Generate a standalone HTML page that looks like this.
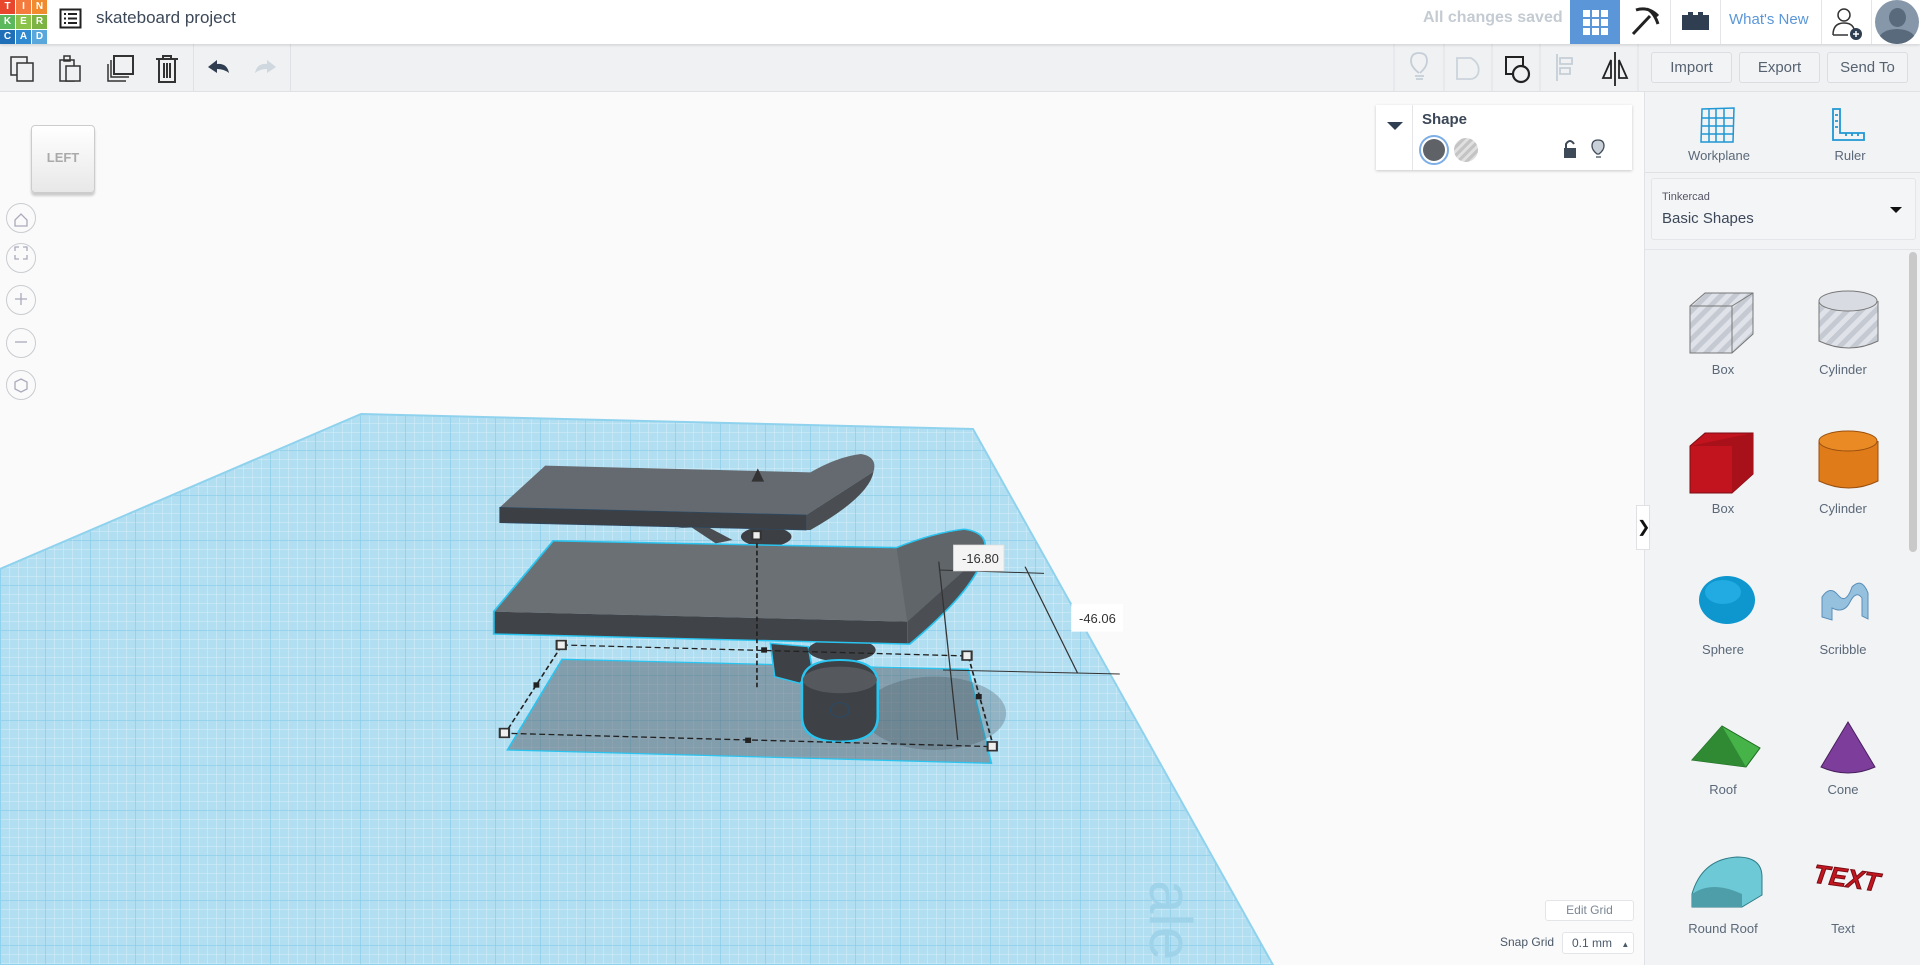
<!DOCTYPE html>
<html><head><meta charset="utf-8"><style>
*{margin:0;padding:0;box-sizing:border-box}
html,body{overflow:hidden}
body{width:1920px;height:965px;overflow:hidden;background:#fafafa;font-family:"Liberation Sans",sans-serif;position:relative;color:#3c4a5a}
.a{position:absolute}
.top{left:0;top:0;width:1920px;height:44px;background:#fff;box-shadow:0 1px 3px rgba(0,0,0,.15);z-index:3}
.tb{left:0;top:44px;width:1644px;height:48px;background:#f0f1f3;border-bottom:1px solid #dfe1e4}
.btn{top:52px;height:31px;border:1px solid #dadde1;border-radius:3px;font-size:15px;color:#566270;text-align:center;line-height:29px;background:#f2f3f5;z-index:2}
.rp{left:1644px;top:92px;width:276px;height:873px;background:#f2f3f5;border-left:1px solid #e0e2e5;overflow:hidden}
.tbr{left:1644px;top:44px;width:276px;height:48px;background:#f0f1f3;border-bottom:1px solid #dfe1e4}
.lbl{font-size:13px;color:#5a6878;text-align:center;width:120px}
.nav{width:30px;height:30px;border:1px solid #c9ccd0;border-radius:50%;left:6px;background:#fafafa}
</style></head><body>
<svg class="a" style="left:0;top:0" width="1644" height="965">
<defs>
<pattern id="g" width="9" height="9" patternUnits="userSpaceOnUse"><rect width="9" height="9" fill="#b2def1"/><path d="M0 0H9M0 0V9" stroke="#d8eff9" stroke-width="1"/></pattern>
<pattern id="G" width="45" height="45" patternUnits="userSpaceOnUse"><path d="M0 0H45M0 0V45" stroke="#7cc7e6" stroke-width="1"/></pattern>
</defs>
<polygon points="361,414 973,429 1273,965 0,965 0,569" fill="url(#g)"/>
<polygon points="361,414 973,429 1273,965 0,965 0,569" fill="url(#G)" stroke="#8fd2ee" stroke-width="2"/>
<text x="1150" y="880" font-size="60" fill="#9fd3ea" transform="rotate(90 1150 880)" font-family="Liberation Sans">ale</text>
<g transform="translate(480,430) scale(0.4209,0.3333)">
<polygon points="195,688 1160,718 1215,1000 65,960" fill="rgba(70,80,90,.45)" stroke="#29c5f0" stroke-width="4"/>
<ellipse cx="1080" cy="850" rx="170" ry="110" fill="rgba(70,80,90,.3)"/>
<path d="M460,295 L500,290 L560,340 L600,330 L540,290Z" fill="#4a4e52"/>
<ellipse cx="680" cy="320" rx="60" ry="30" fill="#3c3f43"/>
<path d="M47,232 L155,107 L785,127 Q850,80 905,72 Q945,80 935,125 L775,255 Z" fill="#646a70"/>
<path d="M47,232 L775,255 L775,300 L47,278 Z" fill="#3c3f43" stroke="#2b4a66" stroke-width="2"/>
<path d="M775,255 L935,125 Q925,200 785,300 L775,300Z" fill="#4a4e52"/>
<path d="M660,115 L675,155 L645,155Z" fill="#333"/>
<path d="M690,640 L780,650 L790,720 L760,760 L700,740 Z" fill="#3e4145" stroke="#29c5f0" stroke-width="4"/>
<ellipse cx="860" cy="660" rx="80" ry="35" fill="#3e4145"/>
<path d="M35,545 L175,335 L990,355 Q1080,310 1150,300 Q1210,310 1195,370 Q1180,470 1020,640 L35,610Z" fill="none" stroke="#29c5f0" stroke-width="9"/>
<path d="M35,545 L175,335 L990,355 Q1080,310 1150,300 Q1210,310 1195,370 L1015,575Z" fill="#6b7075"/>
<path d="M990,355 L1015,575 L1195,370 Q1210,310 1150,300 Q1080,310 990,355Z" fill="#606569"/>
<path d="M35,545 L1015,575 L1015,640 L35,610 Z" fill="#404347"/>
<path d="M1015,575 L1195,370 Q1180,470 1020,640 L1015,640Z" fill="#4b4f53"/>
<path d="M765,760 Q765,690 855,690 Q945,690 945,760 L945,860 Q945,935 855,935 Q765,935 765,860Z" fill="#3e4145" stroke="#29c5f0" stroke-width="6"/>
<ellipse cx="855" cy="750" rx="88" ry="40" fill="#55595d"/>
<circle cx="855" cy="840" r="22" fill="none" stroke="#2b4a66" stroke-width="3"/>
<path d="M195,645 L1160,678 L1220,950 L60,910 Z M658,340 V780" fill="none" stroke="#222" stroke-width="4" stroke-dasharray="14,8"/>
<path d="M1090,420 L1340,430 M1295,410 L1420,730 M1100,720 L1520,732 M1090,395 L1135,930" stroke="#333" stroke-width="3" fill="none"/>
<g fill="#eee" stroke="#333" stroke-width="5">
<rect x="182" y="632" width="22" height="26"/><rect x="1146" y="664" width="22" height="26"/><rect x="47" y="896" width="22" height="26"/><rect x="1206" y="936" width="22" height="26"/><rect x="647" y="304" width="20" height="24"/></g>
<g fill="#222"><rect x="127" y="757" width="14" height="16"/><rect x="630" y="923" width="14" height="16"/><rect x="1178" y="792" width="14" height="16"/><rect x="668" y="652" width="14" height="16"/></g>
<rect x="1125" y="345" width="120" height="78" fill="#f4f4f4" stroke="#ddd" stroke-width="2"/>
<rect x="1405" y="522" width="123" height="83" fill="#fff"/>
</g>
<text x="962" y="563" font-size="13" fill="#333" font-family="Liberation Sans">-16.80</text>
<text x="1079" y="623" font-size="13" fill="#333" font-family="Liberation Sans">-46.06</text>
</svg>

<div class="a top">
 <div class="a" style="left:0;top:0;width:46px;height:43px;display:grid;grid-template-columns:repeat(3,15px);grid-template-rows:repeat(3,14px);gap:1px;font:bold 10px 'Liberation Sans';color:#fff;text-align:center;line-height:14px">
  <div style="background:#e8472e">T</div><div style="background:#f47a3d">I</div><div style="background:#f08c2e">N</div>
  <div style="background:#5cb85c">K</div><div style="background:#8bc34a">E</div><div style="background:#7cb342">R</div>
  <div style="background:#1e6fb8">C</div><div style="background:#2f8ad2">A</div><div style="background:#5aa7dc">D</div></div>
 <svg class="a" style="left:59px;top:8px" width="24" height="22"><rect x="1.5" y="1.5" width="20" height="18" fill="none" stroke="#222" stroke-width="2"/><path d="M5 6h2M9 6h9M5 10.5h2M9 10.5h9M5 15h2M9 15h9" stroke="#222" stroke-width="2"/></svg>
 <div class="a" style="left:96px;top:8px;font-size:17px;color:#3c4858">skateboard project</div>
 <div class="a" style="left:1423px;top:9px;font-size:16px;font-weight:bold;color:#c4cbd2">All changes saved</div>
 <div class="a" style="left:1570px;top:0;width:50px;height:44px;background:#5b97d8"><svg width="50" height="44"><g fill="#fff"><rect x="13" y="10" width="7" height="7"/><rect x="22" y="10" width="7" height="7"/><rect x="31" y="10" width="7" height="7"/><rect x="13" y="19" width="7" height="7"/><rect x="22" y="19" width="7" height="7"/><rect x="31" y="19" width="7" height="7"/><rect x="13" y="28" width="7" height="7"/><rect x="22" y="28" width="7" height="7"/><rect x="31" y="28" width="7" height="7"/></g></svg></div>
 <svg class="a" style="left:1620px;top:0" width="50" height="44"><path d="M16 10 Q28 6 38 16 M27 9 Q34 12 38 24 M30 16 L13 34" stroke="#222" stroke-width="3" fill="none"/></svg>
 <div class="a" style="left:1670px;top:0;width:1px;height:44px;background:#e3e5e8"></div>
 <svg class="a" style="left:1671px;top:0" width="49" height="44"><path d="M11 15h6v-3h5v3h5v-3h5v3h6v15h-27z" fill="#2f3e50"/></svg>
 <div class="a" style="left:1720px;top:0;width:1px;height:44px;background:#e3e5e8"></div>
 <div class="a" style="left:1729px;top:11px;font-size:15px;color:#5b97d8">What's New</div>
 <div class="a" style="left:1821px;top:0;width:1px;height:44px;background:#e3e5e8"></div>
 <svg class="a" style="left:1830px;top:5px" width="36" height="36"><circle cx="14" cy="10" r="6" fill="none" stroke="#333" stroke-width="1.5"/><path d="M3 30 Q3 18 14 18 Q22 18 24 24 M3 30 H18" fill="none" stroke="#333" stroke-width="1.5"/><circle cx="26" cy="29" r="6" fill="#2f3e50"/><path d="M26 26v6M23 29h6" stroke="#fff" stroke-width="1.5"/></svg>
 <div class="a" style="left:1871px;top:0;width:1px;height:44px;background:#e3e5e8"></div>
 <div class="a" style="left:1875px;top:0;width:44px;height:44px;border-radius:50%;background:#8797aa;overflow:hidden"><div style="margin:8px auto 0;width:17px;height:19px;border-radius:50%;background:#5a6a7d"></div><div style="margin:2px auto;width:36px;height:20px;border-radius:50% 50% 0 0;background:#5a6a7d"></div></div>
</div>

<div class="a tb">
 <svg class="a" style="left:0;top:0" width="300" height="48" fill="none" stroke="#333" stroke-width="1.5">
  <rect x="11" y="13" width="16" height="18"/><rect x="17" y="19" width="16" height="18" fill="#f0f1f3"/>
  <rect x="60" y="16" width="14" height="21"/><rect x="66" y="22" width="14" height="15" fill="#f0f1f3"/><rect x="64" y="12" width="6" height="5"/>
  <rect x="114" y="12" width="19" height="18" stroke-width="2"/><path d="M111 16v17h18M108 20v17h18"/>
  <path d="M156 15h22M163 15v-3h8v3M159 15v23h16v-23M164 19v15M167 19v15M170 19v15" stroke-width="2"/>
 </svg>
 <div class="a" style="left:193px;top:0;width:1px;height:48px;background:#dfe1e4"></div>
 <svg class="a" style="left:205px;top:10px" width="75" height="30"><path d="M3 13 L12 6 V10 Q22 9 24 19 Q19 15 12 15 V19Z" fill="#2f3e50"/><path d="M71 13 L62 6 V10 Q52 9 50 19 Q55 15 62 15 V19Z" fill="#cfd7df"/></svg>
 <div class="a" style="left:290px;top:0;width:1px;height:48px;background:#dfe1e4"></div>
 <svg class="a" style="left:1390px;top:0" width="254" height="48" fill="none" stroke-width="1.8">
  <line x1="4" y1="0" x2="4" y2="48" stroke="#dfe1e4" stroke-width="1"/>
  <path d="M29 29 Q21 23 21 17 Q21 9 29 9 Q37 9 37 17 Q37 23 30 29 M25 32h9M26 35h7" stroke="#c5ced7"/>
  <line x1="54" y1="0" x2="54" y2="48" stroke="#dfe1e4" stroke-width="1"/>
  <path d="M67 14h14q10 6 7 16q-3 6-10 5h-11z" stroke="#cbd3db"/>
  <line x1="102" y1="0" x2="102" y2="48" stroke="#dfe1e4" stroke-width="1"/>
  <rect x="116" y="13" width="17" height="17" stroke="#222" stroke-width="2"/><circle cx="131" cy="30" r="8" stroke="#222" stroke-width="2.2" fill="#f0f1f3"/>
  <line x1="150" y1="0" x2="150" y2="48" stroke="#dfe1e4" stroke-width="1"/>
  <path d="M167 10v27M170 14h12v6h-12zM170 24h10v6h-10z" stroke="#c5ced7"/>
  <path d="M225 8v34M221 16v18h-8zM229 16v18h8z" stroke="#222"/>
  <line x1="248" y1="0" x2="248" y2="48" stroke="#dfe1e4" stroke-width="1"/>
 </svg>
</div>
<div class="a tbr"></div>
<div class="a btn" style="left:1651px;width:81px">Import</div>
<div class="a btn" style="left:1739px;width:81px">Export</div>
<div class="a btn" style="left:1827px;width:81px">Send To</div>

<div class="a" style="left:31px;top:125px;width:64px;height:68px;background:linear-gradient(#fff,#e8e8e8);border:1px solid #ccc;border-radius:4px;font-size:13px;color:#aaa;font-weight:bold;text-align:center;line-height:64px;box-shadow:0 3px 2px #ccc">LEFT</div>
<div class="a nav" style="top:203px"></div><div class="a nav" style="top:243px"></div><div class="a nav" style="top:285px"></div><div class="a nav" style="top:328px"></div><div class="a nav" style="top:370px"></div>
<svg class="a" style="left:6px;top:203px" width="30" height="200" fill="none" stroke="#aab" stroke-width="1.3"><path d="M9 17l6-6 6 6v6h-12z"/><path d="M9 48v-4h4M17 44h4v4M21 52v4h-4M13 56h-4v-4"/><path d="M15 90v12M9 96h12"/><path d="M9 139h12"/><path d="M15 176l6 3v7l-6 3-6-3v-7z"/></svg>

<div class="a" style="left:1376px;top:105px;width:256px;height:65px;background:#fff;box-shadow:0 1px 3px rgba(0,0,0,.2)">
 <div class="a" style="left:11px;top:17px;border-left:8px solid transparent;border-right:8px solid transparent;border-top:8px solid #2f3e50"></div>
 <div class="a" style="left:36px;top:0;width:1px;height:65px;background:#e3e5e8"></div>
 <div class="a" style="left:46px;top:6px;font-size:15px;font-weight:bold;color:#3c4858">Shape</div>
 <div class="a" style="left:43px;top:30px;width:30px;height:30px;border-radius:50%;border:2px solid #7eaee6;padding:2px"><div style="width:22px;height:22px;border-radius:50%;background:#5f6368"></div></div>
 <div class="a" style="left:78px;top:33px;width:24px;height:24px;border-radius:50%;background:repeating-linear-gradient(135deg,#c4c4c4 0 3px,#e0e0e0 3px 6px)"></div>
 <svg class="a" style="left:187px;top:33px" width="60" height="24"><rect x="1" y="10" width="12" height="10" fill="#3e4a57"/><path d="M3 10V6q4-6 8 0" fill="none" stroke="#3e4a57" stroke-width="2"/><path d="M34 16q-5-4-5-8q0-6 6-6q6 0 6 6q0 4-5 8zM33 19h5" fill="#c9d0d7" stroke="#3e4a57" stroke-width="1.3"/></svg>
</div>

<div class="a rp">
 <svg class="a" style="left:54px;top:14px" width="40" height="40" fill="none" stroke="#1f97d4" stroke-width="1.5"><path d="M3 3l32-1l-1 34h-32zM10 3v33M17 3v33M25 3v33M3 12h32M3 20h32M3 28h32"/></svg>
 <div class="a lbl" style="left:14px;top:56px">Workplane</div>
 <svg class="a" style="left:185px;top:14px" width="40" height="40" fill="none" stroke="#1f97d4" stroke-width="1.8"><path d="M3 3h7v24h24v7h-31zM5 9h3M5 15h3M5 21h3M16 30v-3M22 30v-3M28 30v-3"/></svg>
 <div class="a lbl" style="left:145px;top:56px">Ruler</div>
 <div class="a" style="left:0;top:80px;width:276px;height:1px;background:#dfe1e4"></div>
 <div class="a" style="left:6px;top:86px;width:265px;height:62px;background:#f4f5f7;border:1px solid #e3e5e8;border-radius:3px">
  <div class="a" style="left:10px;top:12px;font-size:11px;color:#556">Tinkercad</div>
  <div class="a" style="left:10px;top:31px;font-size:15px;color:#3c4858">Basic Shapes</div>
  <div class="a" style="left:238px;top:28px;border-left:6px solid transparent;border-right:6px solid transparent;border-top:6px solid #111"></div>
 </div>
 <div class="a" style="left:0;top:157px;width:276px;height:1px;background:#e3e5e8"></div>
 <div class="a" style="left:264px;top:160px;width:8px;height:300px;background:#c9c9c9;border-radius:4px"></div>
 <svg class="a" style="left:0;top:158px" width="260" height="700">
  <defs><pattern id="st" width="10" height="10" patternUnits="userSpaceOnUse" patternTransform="rotate(45)"><rect width="10" height="10" fill="#c5cad2"/><rect width="5" height="10" fill="#dfe2e8"/></pattern></defs>
  <g transform="translate(0,26)">
  <path d="M45 30l15-13h48v41l-21 19h-42z" fill="url(#st)" stroke="#777"/><path d="M45 30h42v47M87 30l21-13" fill="none" stroke="#777"/>
  <path d="M174 25v40q30 14 59 0v-40" fill="url(#st)" stroke="#777"/><ellipse cx="203" cy="25" rx="29" ry="10" fill="#d8dce2" stroke="#777"/>
  </g>
  <g transform="translate(0,64)">
  <path d="M45 132l15-13h48v41l-21 19h-42z" fill="#c2141f" stroke="#7a0d14"/><path d="M45 132h42v47l21-19v-41z" fill="#a8101a"/>
  <path d="M174 127v40q30 14 59 0v-40" fill="#e07b1a" stroke="#995010"/><ellipse cx="203" cy="127" rx="29" ry="10" fill="#ea8a24" stroke="#995010"/>
  </g>
  <g transform="translate(0,100)">
  <ellipse cx="82" cy="250" rx="28" ry="24" fill="#0e96cf"/><ellipse cx="78" cy="242" rx="18" ry="12" fill="#21abe2"/>
  <path d="M177 247q8-12 16-2t14-8q10-10 16 6v26l-6-3v-18q-6-8-12 4t-18 6v12l-10-3z" fill="#95c0de" stroke="#5a8fb8"/>
  </g>
  <g transform="translate(0,142)">
  <path d="M47 368l30-34l38 22l-14 19z" fill="#45b348" stroke="#1e6b22"/><path d="M47 368l30-34l24 41z" fill="#2f8a33"/>
  <path d="M203 330l-27 45q27 12 54 0z" fill="#7d3d9a" stroke="#4a2060"/>
  </g>
  <g transform="translate(0,177)">
  <path d="M47 467q10-35 45-37q25 0 25 20v18l-20 12h-50z" fill="#6dc9d6" stroke="#2e7c87"/><path d="M47 467q20-14 50 0v13h-50z" fill="#4d9ea9"/>
  <g transform="rotate(8 203 440)"><text x="170" y="460" font-family="Liberation Sans" font-weight="bold" font-style="italic" font-size="26" fill="#c3161f" stroke="#7a0d14">TEXT</text></g>
  </g>
  <g font-family="Liberation Sans" font-size="13" fill="#5a6878" text-anchor="middle">
  <text x="78" y="124">Box</text><text x="198" y="124">Cylinder</text>
  <text x="78" y="263">Box</text><text x="198" y="263">Cylinder</text>
  <text x="78" y="404">Sphere</text><text x="198" y="404">Scribble</text>
  <text x="78" y="544">Roof</text><text x="198" y="544">Cone</text>
  <text x="78" y="683">Round Roof</text><text x="198" y="683">Text</text></g>
 </svg>
</div>
<div class="a" style="left:1636px;top:505px;width:14px;height:45px;background:#fff;border:1px solid #dfe1e4;font-size:16px;line-height:43px;text-align:center;color:#111">❯</div>

<div class="a" style="left:1545px;top:900px;width:89px;height:21px;border:1px solid #e3e5e8;border-radius:3px;background:#fff;font-size:12px;color:#7a8794;text-align:center;line-height:19px">Edit Grid</div>
<div class="a" style="left:1500px;top:935px;font-size:12px;color:#4a5868">Snap Grid</div>
<div class="a" style="left:1562px;top:932px;width:72px;height:22px;border:1px solid #e3e5e8;border-radius:3px;background:#fff;font-size:12px;color:#4a5868;line-height:20px;padding-left:9px">0.1 mm <span style="font-size:8px;margin-left:6px">▲</span></div>
</body></html>
